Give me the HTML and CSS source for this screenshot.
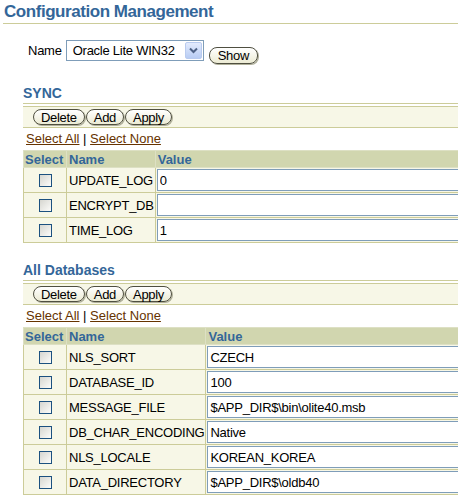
FILE: index.html
```html
<!DOCTYPE html>
<html lang="en">
<head>
  <meta charset="UTF-8">
  <title>Configuration Management</title>
  <meta name="viewport" content="width=device-width, initial-scale=1">
  <link rel="stylesheet" href="styles.css">
</head>

<body>

  <h1 class="page-title">Configuration Management</h1>

  <!-- Escolha da configuração -->
  <div class="name-row">
    <label class="name-label">Name</label>
    <div class="select-box">
      <span class="select-text">Oracle Lite WIN32</span>
      <span class="select-arrow">
        <svg width="15" height="15" viewBox="0 0 15 15"><path d="M4 5.5 L7.5 9 L11 5.5" fill="none" stroke="#4d6185" stroke-width="2"/></svg>
      </span>
    </div>
    <button class="btn btn-show">Show</button>
  </div>

  <!-- SYNC -->
  <section class="group">
    <h2>SYNC</h2>
    <div class="toolbar">
      <button class="btn">Delete</button>
      <button class="btn">Add</button>
      <button class="btn">Apply</button>
    </div>
    <div class="select-links"><a href="#">Select All</a> | <a href="#">Select None</a></div>
    <table class="grid">
      <thead>
        <tr><th class="col-select">Select</th><th class="col-name">Name</th><th>Value</th></tr>
      </thead>
      <tbody>
        <tr><td class="cell-check"><input type="checkbox"></td><td>UPDATE_LOG</td><td class="cell-value"><input type="text" value="0"></td></tr>
        <tr><td class="cell-check"><input type="checkbox"></td><td>ENCRYPT_DB</td><td class="cell-value"><input type="text" value=""></td></tr>
        <tr><td class="cell-check"><input type="checkbox"></td><td>TIME_LOG</td><td class="cell-value"><input type="text" value="1"></td></tr>
      </tbody>
    </table>
  </section>

  <!-- All Databases -->
  <section class="group">
    <h2>All Databases</h2>
    <div class="toolbar">
      <button class="btn">Delete</button>
      <button class="btn">Add</button>
      <button class="btn">Apply</button>
    </div>
    <div class="select-links"><a href="#">Select All</a> | <a href="#">Select None</a></div>
    <table class="grid">
      <thead>
        <tr><th class="col-select">Select</th><th class="col-name">Name</th><th>Value</th></tr>
      </thead>
      <tbody>
        <tr><td class="cell-check"><input type="checkbox"></td><td>NLS_SORT</td><td class="cell-value"><input type="text" value="CZECH"></td></tr>
        <tr><td class="cell-check"><input type="checkbox"></td><td>DATABASE_ID</td><td class="cell-value"><input type="text" value="100"></td></tr>
        <tr><td class="cell-check"><input type="checkbox"></td><td>MESSAGE_FILE</td><td class="cell-value"><input type="text" value="$APP_DIR$\bin\olite40.msb"></td></tr>
        <tr><td class="cell-check"><input type="checkbox"></td><td>DB_CHAR_ENCODING</td><td class="cell-value"><input type="text" value="Native"></td></tr>
        <tr><td class="cell-check"><input type="checkbox"></td><td>NLS_LOCALE</td><td class="cell-value"><input type="text" value="KOREAN_KOREA"></td></tr>
        <tr><td class="cell-check"><input type="checkbox"></td><td>DATA_DIRECTORY</td><td class="cell-value"><input type="text" value="$APP_DIR$\oldb40"></td></tr>
      </tbody>
    </table>
  </section>

</body>
</html>
```

FILE: styles.css
```css
body {
  margin: 0;
  overflow: hidden;
  font-family: "Liberation Sans", Arial, sans-serif;
  font-size: 13px;
  letter-spacing: -0.25px;
  color: #000;
}

/* Título */
.page-title {
  margin: 0 0 0 3px;
  padding-left: 1px;
  font-size: 17px;
  font-weight: bold;
  letter-spacing: -0.45px;
  line-height: 23px;
  color: #336699;
  border-bottom: 1px solid #cccc99;
}

.name-row {
  display: flex;
  align-items: flex-start;
  margin-top: 16px;
  padding-left: 28px;
}

.name-label {
  line-height: 21px;
  margin-right: 4px;
}

.select-box {
  width: 138px;
  height: 21px;
  box-sizing: border-box;
  border: 1px solid #7f9db9;
  background: #fff;
  display: flex;
  align-items: center;
  justify-content: space-between;
  padding: 0 1px 0 6px;
}

.select-arrow {
  width: 17px;
  height: 17px;
  box-sizing: border-box;
  border: 1px solid #b9cbef;
  border-radius: 2px;
  background: linear-gradient(#e3ebfd, #b8ccf3);
  display: flex;
  align-items: center;
  justify-content: center;
}

/* Botões arredondados */
.btn {
  height: 16px;
  padding: 0 7px;
  border: 1px solid #4f4f40;
  border-radius: 8px;
  background: linear-gradient(#ffffff, #ecebd4);
  box-shadow: 1px 1px 0 #b0b09a;
  font-family: inherit;
  font-size: 13px;
  letter-spacing: -0.3px;
  line-height: 13px;
  color: #000;
  cursor: pointer;
}

.btn-show {
  height: 17px;
  margin-left: 5px;
  margin-top: 7px;
  padding: 0 8px;
}

/* Secções */
.group {
  padding-left: 23px;
  margin-top: 21px;
}

.group + .group {
  margin-top: 19px;
}

.group h2 {
  margin: 0;
  font-size: 14px;
  font-weight: bold;
  letter-spacing: 0;
  line-height: 16px;
  padding-bottom: 2px;
  color: #336699;
  border-bottom: 1px solid #cccc99;
}

.toolbar {
  display: flex;
  gap: 1px;
  margin-top: 2px;
  padding: 2px 10px;
  background: #f7f7e7;
  border-top: 1px solid #cccc99;
  border-bottom: 1px solid #cccc99;
}

.select-links {
  line-height: 22px;
  padding-left: 3px;
  letter-spacing: 0;
}

.select-links a {
  color: #663300;
}

/* Tabela */
.grid {
  width: 600px;
  border-collapse: collapse;
}

.grid th {
  background-color: #d0d5ae;
  background-image: repeating-conic-gradient(#cdd2aa 0 25%, #d4d9b4 0 50%);
  background-size: 2px 2px;
  color: #336699;
  font-weight: bold;
  letter-spacing: 0;
  text-align: left;
  line-height: 15px;
  padding: 1px 1px 0 2px;
  border: 1px solid #dde0c4;
}

.grid .col-select {
  width: 40px;
  padding-left: 1px;
}

.grid .col-name {
  width: 1px;
  white-space: nowrap;
}

.grid td {
  background: #f7f7e7;
  border: 1px solid #cccc99;
  padding: 1px 1px 1px 2px;
  height: 22px;
  white-space: nowrap;
}

.grid .cell-check {
  text-align: center;
}

.grid .cell-value {
  padding-left: 1px;
}

.grid input[type=checkbox] {
  appearance: none;
  display: block;
  width: 13px;
  height: 13px;
  margin: 0 auto;
  border: 1px solid #1c5180;
  background: linear-gradient(135deg, #d6d6d0, #fcfcfa);
}

.grid input[type=text] {
  display: block;
  width: 100%;
  height: 22px;
  box-sizing: border-box;
  border: 1px solid #7f9db9;
  padding: 0 2px;
  font-family: inherit;
  font-size: 13px;
  letter-spacing: -0.25px;
  background: #fff;
  color: #000;
}
```
